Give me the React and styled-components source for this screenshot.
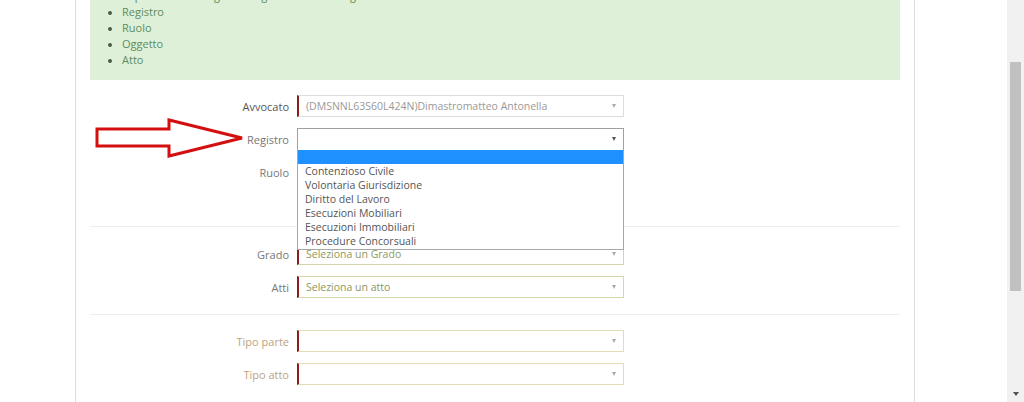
import React from "react";
import styled, { createGlobalStyle } from "styled-components";

const Global = createGlobalStyle`
  html, body { margin: 0; padding: 0; background: #fff; overflow: hidden; }
  body { font-family: "Open Sans", "Liberation Sans", sans-serif; }
`;

const Screen = styled.div`
  position: relative;
  display: flex;
  width: 1024px;
  height: 402px;
  overflow: hidden;
`;

const Main = styled.div`
  flex: 1;
  overflow: hidden;
`;

const Panel = styled.div`
  box-sizing: border-box;
  margin-left: 75px;
  width: 840px;
  min-height: 420px;
  border-left: 1px solid #dcdcdc;
  border-right: 1px solid #dcdcdc;
  padding: 0 14px;
  margin-top: -12px;
`;

const Alert = styled.div`
  background: #dff0d8;
  color: #5d8c5d;
  font-size: 11px;
  line-height: 16px;
  padding: 0 0 12px 0;
  margin-bottom: 15px;
`;

const AlertTitle = styled.div`
  padding-left: 28px;
`;

const List = styled.ul`
  margin: 0;
  padding-left: 32px;
  list-style: disc;
  li::marker { color: #4a5f4a; font-size: 10px; }
`;

const Section = styled.div`
  display: flex;
  flex-direction: column;
  gap: 11px;
  padding-top: ${(p) => p.$top || 0}px;
  padding-bottom: ${(p) => p.$bottom || 0}px;
  border-top: ${(p) => (p.$divider ? "1px solid #eeeeee" : "none")};
`;

const Row = styled.div`
  display: grid;
  grid-template-columns: 199px 327px;
  column-gap: 8px;
  align-items: center;
  height: 22px;
`;

const Label = styled.label`
  text-align: right;
  font-size: 11px;
  color: ${(p) => p.$color || "#777"};
`;

const Select = styled.div`
  position: relative;
  box-sizing: border-box;
  height: 22px;
  display: flex;
  align-items: center;
  padding: 0 7px;
  font-size: 10.5px;
  color: ${(p) => p.$text || "#999"};
  background: #fff;
  border: 1px solid ${(p) => p.$border || "#dddddd"};
  border-left: ${(p) => (p.$required ? "2px solid #8e1c1c" : `1px solid ${p.$border || "#dddddd"}`)};
  white-space: nowrap;
`;

const Caret = styled.span`
  margin-left: auto;
  width: 0;
  height: 0;
  border-left: 2.5px solid transparent;
  border-right: 2.5px solid transparent;
  border-top: 4px solid ${(p) => (p.$dark ? "#555" : "#aaa")};
`;

const Dropdown = styled.div`
  position: absolute;
  top: 100%;
  left: -1px;
  right: -1px;
  box-sizing: border-box;
  background: #fff;
  border: 1px solid #a7a7a7;
  border-top: none;
  z-index: 5;
  padding-top: 1px;
  padding-bottom: 1px;
`;

const Option = styled.div`
  height: ${(p) => (p.$selected ? 14 : 14)}px;
  line-height: 14px;
  padding-left: 7px;
  font-size: 10.5px;
  color: #555;
  background: ${(p) => (p.$selected ? "#1e90ff" : "transparent")};
`;

const ScrollBar = styled.div`
  width: 17px;
  background: #f1f1f1;
  display: flex;
  flex-direction: column;
  align-items: center;
  padding-top: 62px;
  box-sizing: border-box;
`;

const Thumb = styled.div`
  width: 11px;
  height: 229px;
  background: #c1c1c1;
`;

const DownArrow = styled.div`
  margin-top: auto;
  margin-bottom: 6px;
  width: 0;
  height: 0;
  border-left: 3.5px solid transparent;
  border-right: 3.5px solid transparent;
  border-top: 4px solid #505050;
`;

const Annotation = styled.svg`
  position: absolute;
  left: 94px;
  top: 117px;
  z-index: 10;
`;

const options = [
  "Contenzioso Civile",
  "Volontaria Giurisdizione",
  "Diritto del Lavoro",
  "Esecuzioni Mobiliari",
  "Esecuzioni Immobiliari",
  "Procedure Concorsuali",
];

export default function App() {
  return (
    <>
      <Global />
      <Screen>
        <Main>
          <Panel>
            <Alert>
              <AlertTitle>In questa fase bisogna obbligatoriamente scegliere :</AlertTitle>
              <List>
                <li>Registro</li>
                <li>Ruolo</li>
                <li>Oggetto</li>
                <li>Atto</li>
              </List>
            </Alert>

            <Section $bottom={43}>
              <Row>
                <Label $color="#555">Avvocato</Label>
                <Select $required>
                  (DMSNNL63S60L424N)Dimastromatteo Antonella
                  <Caret />
                </Select>
              </Row>
              <Row>
                <Label>Registro</Label>
                <Select $border="#a0a0a0">
                  <Caret $dark />
                  <Dropdown>
                    <Option $selected />
                    {options.map((o) => (
                      <Option key={o}>{o}</Option>
                    ))}
                  </Dropdown>
                </Select>
              </Row>
              <Row>
                <Label>Ruolo</Label>
                <Select />
              </Row>
            </Section>

            <Section $divider $top={16} $bottom={16}>
              <Row>
                <Label>Grado</Label>
                <Select $required $border="#d6d6aa" $text="#8c9860">
                  Seleziona un Grado
                  <Caret />
                </Select>
              </Row>
              <Row>
                <Label>Atti</Label>
                <Select $required $border="#d6d6aa" $text="#8c9860">
                  Seleziona un atto
                  <Caret />
                </Select>
              </Row>
            </Section>

            <Section $divider $top={15}>
              <Row>
                <Label $color="#bda27e">Tipo parte</Label>
                <Select $required $border="#e2ddb4">
                  <Caret />
                </Select>
              </Row>
              <Row>
                <Label $color="#bda27e">Tipo atto</Label>
                <Select $required $border="#e2ddb4">
                  <Caret />
                </Select>
              </Row>
            </Section>
          </Panel>
        </Main>
        <ScrollBar>
          <Thumb />
          <DownArrow />
        </ScrollBar>
        <Annotation width="152" height="44" viewBox="0 0 152 44">
          <polygon
            points="3,12 75,12 75,3 148,21 75,39 75,29 3,29"
            fill="#fff"
            stroke="#d40f0f"
            strokeWidth="3"
            strokeLinejoin="miter"
          />
        </Annotation>
      </Screen>
    </>
  );
}
